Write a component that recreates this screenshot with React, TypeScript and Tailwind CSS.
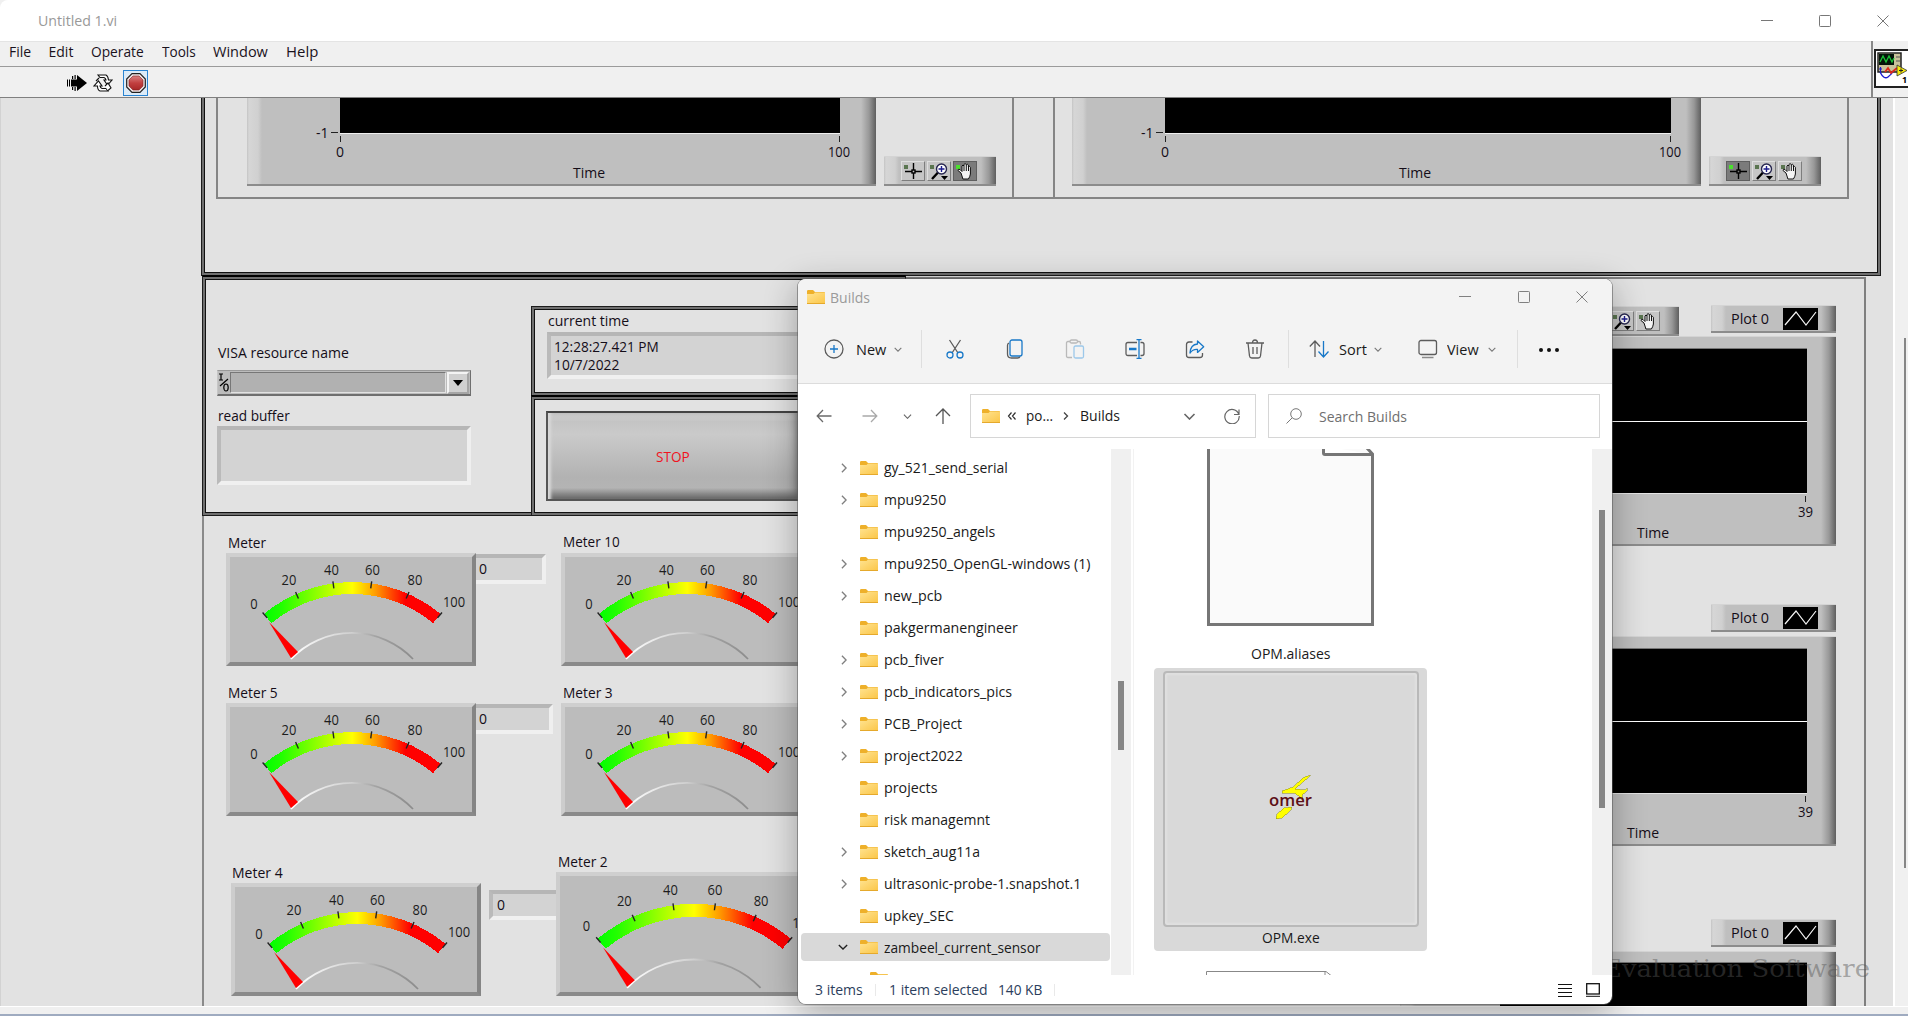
import React, { useLayoutEffect, useRef, useState } from "react";

/* Text squeezed or stretched horizontally to an exact advance width. */
function Fit({ w, className = "", children }: { w: number; className?: string; children: string }) {
  const ref = useRef<HTMLSpanElement>(null);
  const [k, setK] = useState(1);
  useLayoutEffect(() => {
    const n = ref.current?.offsetWidth ?? 0;
    if (n > 0) setK(w / n);
  }, [w, children]);
  return (
    <span className={`block h-5 shrink-0 whitespace-nowrap leading-5 ${className}`} style={{ width: w }}>
      <span ref={ref} className="inline-block origin-left" style={{ transform: `scaleX(${k})` }}>
        {children}
      </span>
    </span>
  );
}

/* ---------- LabVIEW front panel ---------- */

const Frame = ({ className }: { className: string }) => (
  <div className={`absolute border border-[#1c1c1c] shadow-[inset_0_0_0_2px_#6f6f6f,inset_0_0_0_3px_#101010] ${className}`} />
);

const Face = ({ className, children }: { className: string; children?: React.ReactNode }) => (
  <div
    className={`absolute flex border-b-2 border-t border-b-[#8c8c8c] border-t-[#d4d4d4] bg-[linear-gradient(90deg,#c4c4c4_0,#d6d6d6_2px,#d0d0d0_11px,#bfbfbf_15px,#bfbfbf_calc(100%-15px),#989898_calc(100%-7px),#5f5f5f_100%)] ${className}`}
  >
    {children}
  </div>
);

const Sunken = ({ className, children }: { className: string; children?: React.ReactNode }) => (
  <div className={`absolute border-4 border-b-[#f0f0f0] border-l-[#bababa] border-r-[#efefef] border-t-[#b6b6b6] bg-[#d3d3d3] ${className}`}>
    {children}
  </div>
);

function PaletteButton({ kind, on }: { kind: "cross" | "zoom" | "hand"; on?: boolean }) {
  return (
    <div
      className={`h-5 w-6 border ${on ? "border-[#5f5f5f] bg-[#7b7b7b]" : "border-b-[#7d7d7d] border-l-[#dedede] border-r-[#7d7d7d] border-t-[#dedede] bg-[#c6c6c6]"}`}
    >
      <svg viewBox="0 0 24 20" className="-ml-px -mt-px h-5 w-6">
        <rect x="3" y="4" width="4" height="4" fill={on ? "#4be02e" : "#5a7550"} />
        {kind === "cross" && (
          <g stroke="#000" strokeWidth="1.4" fill="none">
            <path d="M12.500 2v7M12.500 12v6M4 10.500h7M14 10.500h7" />
            <rect x="11" y="9" width="3" height="3" />
          </g>
        )}
        {kind === "zoom" && (
          <g>
            <path d="M11 11.5L5 18" stroke="#000" strokeWidth="2.4" />
            <circle cx="14.5" cy="8" r="5" fill="#fff" stroke="#26264f" strokeWidth="1.4" />
            <path d="M14.5 5v6M11.5 8h6" stroke="#1c1c8c" strokeWidth="1.4" />
            <path d="M14 15h7l-3.5 4z" />
          </g>
        )}
        {kind === "hand" && (
          <path
            d="M8 12L5 9.500q0-2 2-1l2 2V5q1-2 2 0V3.500q1-2 2.200 0V4q1-1.600 2.200 0v2q1.300-1.400 2 .300V13q-.5 3-2 5h-5.500Q9 15 8 12zM11 5v5M13.300 4v6M15.500 5v5"
            fill="#f4f4f4"
            stroke="#111"
            strokeWidth="1"
          />
        )}
      </svg>
    </div>
  );
}

function Palette({ className, active }: { className: string; active?: number }) {
  return (
    <Face className={`h-[30px] w-[112px] gap-[2px] pl-[17px] pt-1 ${className}`}>
      <PaletteButton kind="cross" on={active === 0} />
      <PaletteButton kind="zoom" on={active === 1} />
      <PaletteButton kind="hand" on={active === 2} />
    </Face>
  );
}

function Legend({ className }: { className: string }) {
  return (
    <Face className={`h-[28px] w-[125px] pl-5 pt-[2px] ${className}`}>
      <Fit w={38} className="mr-[14px] mt-px">Plot 0</Fit>
      <svg viewBox="0 0 35 22" className="h-[22px] w-[35px] bg-black">
        <path d="M2 17L13 4l10 13L33 4" fill="none" stroke="#f4f4f4" strokeWidth="1.2" />
      </svg>
    </Face>
  );
}

const polar = (cx: number, cy: number, r: number, deg: number) => {
  const a = (deg * Math.PI) / 180;
  return [cx + r * Math.sin(a), cy - r * Math.cos(a)];
};

const METER_LABELS: [string, number, number][] = [
  ["0", 28, 50.5], ["20", 63, 27], ["40", 105.5, 17], ["60", 146.5, 17], ["80", 189, 27], ["100", 228, 48.5],
];

function Meter({ className, s = 1 }: { className: string; s?: number }) {
  const cx = 126.3 * s, cy = 167.5 * s, R = 138.4 * s, r = 126.5 * s, A = 39.7;
  const p = [polar(cx, cy, R, -A), polar(cx, cy, R, A), polar(cx, cy, r, A), polar(cx, cy, r, -A)];
  const q = (x: number, y: number) => `${x * s} ${y * s}`;
  return (
    <div className={`absolute border-4 border-b-[#8a8a8a] border-l-[#cdcdcd] border-r-[#858585] border-t-[#cfcfcf] bg-[#bcbcbc] ${className}`}>
      <svg className="-ml-1 -mt-1 block overflow-visible" width={246 * s} height={109 * s}>
        <defs>
          <linearGradient id="dial" x1="0" x2="1">
            <stop offset="0" stopColor="#00ff00" />
            <stop offset=".1" stopColor="#22ff00" />
            <stop offset=".5" stopColor="#ffff00" />
            <stop offset=".63" stopColor="#ff9c00" />
            <stop offset=".8" stopColor="#ff0000" />
          </linearGradient>
          <linearGradient id="hub" x1="0" x2="1">
            <stop offset="0" stopColor="#fff" />
            <stop offset=".5" stopColor="#cfcfcf" />
            <stop offset=".7" stopColor="#a2a2a2" />
            <stop offset="1" stopColor="#8c8c8c" />
          </linearGradient>
        </defs>
        <path
          d={`M${p[0]}A${R} ${R} 0 0 1 ${p[1]}L${p[2]}A${r} ${r} 0 0 0 ${p[3]}Z`}
          fill="url(#dial)"
          shapeRendering="crispEdges"
        />
        {[0, 20, 40, 60, 80, 100].map((v) => {
          const a = -A + (v / 100) * 2 * A;
          const [x1, y1] = polar(cx, cy, R + 2, a);
          const [x2, y2] = polar(cx, cy, R - 5, a);
          return <line key={v} x1={x1} y1={y1} x2={x2} y2={y2} stroke="#222" strokeWidth="1.4" />;
        })}
        <path d={`M${q(65, 106)}A${84.5 * s} ${84.5 * s} 0 0 1 ${q(187, 106)}`} fill="none" stroke="url(#hub)" strokeWidth="1.8" />
        <path d={`M${q(43, 69)}L${q(72, 99)}L${q(65, 105)}Z`} fill="#ff0000" />
        {METER_LABELS.map(([t, x, y]) => (
          <text key={t} x={x * (s > 1 ? 1.085 : 1)} y={y * (s > 1 ? 1.06 : 1) + 5} textAnchor="middle" fontSize="14" textLength={t.length * 7.4} lengthAdjust="spacingAndGlyphs" fill="#1c1c1c">
            {t}
          </text>
        ))}
      </svg>
    </div>
  );
}

function FrontPanel() {
  return (
    <div className="absolute -left-px -top-[98px] h-[1016px] w-[1893px] text-[14px] text-[#140d18]">
      <div className="absolute left-[202px] top-[277px] h-[760px] w-[1664px] border-2 border-[#7f7f7f] border-l-[#8a8a8a]" />
      <Frame className="left-[201px] top-0 h-[276px] w-[1680px]" />
      <Frame className="left-[202px] top-[275px] h-[241px] w-[704px] border-t-2 border-t-black" />
      <Frame className="left-[531px] top-[306px] h-[90px] w-[375px]" />
      <Frame className="left-[531px] top-[395px] h-[121px] w-[375px] border-t-2 border-t-black" />

      <div className="absolute left-[216px] top-0 h-[199px] w-[798px] border-2 border-[#858585]" />
      <div className="absolute left-[1012px] top-0 h-[199px] w-[43px] border-2 border-[#858585]" />
      <div className="absolute left-[1053px] top-0 h-[199px] w-[796px] border-2 border-[#858585]" />

      <Face className="left-[247px] top-0 h-[186px] w-[629px]" />
      <div className="absolute left-[340px] top-0 h-[134px] w-[500px] border-b border-[#f0f0f0] bg-black" />
      <Fit w={13} className="absolute left-[316px] top-[123px]">-1</Fit>
      <div className="absolute left-[331px] top-[132px] h-px w-[7px] bg-[#222]" />
      <div className="absolute left-[340px] top-[136px] h-[6px] w-px bg-[#222]" />
      <div className="absolute left-[839px] top-[136px] h-[6px] w-px bg-[#222]" />
      <Fit w={8} className="absolute left-[336px] top-[142px]">0</Fit>
      <Fit w={22} className="absolute left-[828px] top-[142px]">100</Fit>
      <Fit w={32} className="absolute left-[573px] top-[163px]">Time</Fit>
      <Palette className="left-[884px] top-[156px]" active={2} />

      <Face className="left-[1072px] top-0 h-[186px] w-[629px]" />
      <div className="absolute left-[1165px] top-0 h-[134px] w-[506px] border-b border-[#f0f0f0] bg-black" />
      <Fit w={13} className="absolute left-[1141px] top-[123px]">-1</Fit>
      <div className="absolute left-[1156px] top-[132px] h-px w-[7px] bg-[#222]" />
      <div className="absolute left-[1165px] top-[136px] h-[6px] w-px bg-[#222]" />
      <div className="absolute left-[1670px] top-[136px] h-[6px] w-px bg-[#222]" />
      <Fit w={8} className="absolute left-[1161px] top-[142px]">0</Fit>
      <Fit w={22} className="absolute left-[1659px] top-[142px]">100</Fit>
      <Fit w={32} className="absolute left-[1399px] top-[163px]">Time</Fit>
      <Palette className="left-[1709px] top-[156px]" active={0} />

      <Fit w={131} className="absolute left-[218px] top-[343px]">VISA resource name</Fit>
      <div className="absolute left-[217px] top-[370px] flex h-[26px] w-[254px] items-center border border-b-2 border-b-[#6f6f6f] border-l-[#c6c6c6] border-r-[#6f6f6f] border-t-[#9a9a9a] bg-[#bcbcbc]">
        <svg viewBox="0 0 12 22" className="h-[22px] w-[12px] fill-none stroke-black" strokeWidth="1.2">
          <path d="M1 2h4M3 2v6M1 8h4M2 14l8-7" />
          <ellipse cx="8" cy="15.500" rx="2.200" ry="3.500" />
        </svg>
        <div className="h-[21px] w-[216px] border border-b-[#e2e2e2] border-l-[#777] border-r-[#e2e2e2] border-t-[#777] bg-[#b1b1b1]" />
        <div className="ml-px flex h-[22px] w-[22px] items-center justify-center border-2 border-b-[#a5a5a5] border-l-[#f4f4f4] border-r-[#a5a5a5] border-t-[#f4f4f4] bg-[#d0d0d0]">
          <svg viewBox="0 0 10 6" className="h-[6px] w-[10px]"><path d="M0 0h10L5 6z" /></svg>
        </div>
      </div>
      <Fit w={72} className="absolute left-[218px] top-[406px]">read buffer</Fit>
      <Sunken className="left-[217px] top-[426px] h-[59px] w-[254px]" />

      <Fit w={81} className="absolute left-[548px] top-[311px]">current time</Fit>
      <Sunken className="left-[547px] top-[332px] h-[47px] w-[300px]">
        <Fit w={105} className="ml-[3px] mt-px">12:28:27.421 PM</Fit>
        <Fit w={65} className="-mt-[2px] ml-[3px]">10/7/2022</Fit>
      </Sunken>
      <div className="absolute left-[546px] top-[411px] flex h-[90px] w-[256px] items-center border-2 border-[#555] border-t-[#444] bg-[linear-gradient(180deg,#d8d8d8_0,#c4c4c4_10%,#cacaca_25%,#b2b2b2_75%,#b4b4b4_87%,#686868_100%)] pl-[108px] pt-[2px] shadow-[inset_5px_0_3px_-2px_#d8d8d8,inset_-6px_0_8px_-3px_#666]">
        <Fit w={34} className="text-[#f0141e]">STOP</Fit>
      </div>

      <Fit w={38} className="absolute left-[228px] top-[533px]">Meter</Fit>
      <Sunken className="left-[472px] top-[554px] h-[30px] w-[74px]">
        <Fit w={8} className="ml-[3px] mt-px">0</Fit>
      </Sunken>
      <Meter className="left-[226px] top-[553px] h-[113px] w-[250px]" />
      <Fit w={57} className="absolute left-[563px] top-[532px]">Meter 10</Fit>
      <Meter className="left-[561px] top-[553px] h-[113px] w-[250px]" />

      <Fit w={50} className="absolute left-[228px] top-[683px]">Meter 5</Fit>
      <Sunken className="left-[472px] top-[704px] h-[30px] w-[81px]">
        <Fit w={8} className="ml-[3px] mt-px">0</Fit>
      </Sunken>
      <Meter className="left-[226px] top-[703px] h-[113px] w-[250px]" />
      <Fit w={50} className="absolute left-[563px] top-[683px]">Meter 3</Fit>
      <Meter className="left-[561px] top-[703px] h-[113px] w-[250px]" />

      <Fit w={51} className="absolute left-[232px] top-[863px]">Meter 4</Fit>
      <Meter className="left-[231px] top-[883px] h-[113px] w-[250px]" />
      <Sunken className="left-[489px] top-[890px] h-[30px] w-[76px]">
        <Fit w={8} className="ml-1 mt-px">0</Fit>
      </Sunken>
      <Fit w={50} className="absolute left-[558px] top-[852px]">Meter 2</Fit>
      <Meter className="left-[556px] top-[872px] h-[124px] w-[274px]" s={1.094} />

      <Palette className="left-[1567px] top-[306px]" />
      <Legend className="left-[1711px] top-[305px]" />
      <Face className="left-[1400px] top-[336px] h-[210px] w-[436px]" />
      <div className="absolute left-[1500px] top-[348px] h-[146px] w-[307px] border-b border-t border-b-[#e6e6e6] border-t-[#777] bg-black pt-[72px]">
        <div className="h-px bg-white" />
      </div>
      <div className="absolute left-[1805px] top-[496px] h-[6px] w-px bg-[#222]" />
      <Fit w={15} className="absolute left-[1798px] top-[502px]">39</Fit>
      <Fit w={32} className="absolute left-[1637px] top-[523px]">Time</Fit>

      <Legend className="left-[1711px] top-[604px]" />
      <Face className="left-[1400px] top-[636px] h-[210px] w-[436px]" />
      <div className="absolute left-[1500px] top-[648px] h-[146px] w-[307px] border-b border-t border-b-[#e6e6e6] border-t-[#777] bg-black pt-[72px]">
        <div className="h-px bg-white" />
      </div>
      <div className="absolute left-[1805px] top-[796px] h-[6px] w-px bg-[#222]" />
      <Fit w={15} className="absolute left-[1798px] top-[802px]">39</Fit>
      <Fit w={32} className="absolute left-[1627px] top-[823px]">Time</Fit>

      <Legend className="left-[1711px] top-[919px]" />
      <Face className="left-[1400px] top-[951px] h-[100px] w-[436px]" />
      <div className="absolute left-[1500px] top-[962px] h-[90px] w-[307px] border-t border-[#777] bg-black" />
      <Fit w={267} className="absolute left-[1603px] top-[959px] font-['DejaVu_Serif'] text-[25px] text-[#555]/45">
        Evaluation Software
      </Fit>
    </div>
  );
}

/* ---------- Icons ---------- */

const Folder = ({ className = "" }: { className?: string }) => (
  <svg viewBox="0 0 18 14" className={`h-[14px] w-[18px] shrink-0 ${className}`}>
    <defs>
      <linearGradient id="fold" x1="0" y1="0" x2="1" y2="1">
        <stop offset="0" stopColor="#ffe391" />
        <stop offset="1" stopColor="#fbc648" />
      </linearGradient>
    </defs>
    <path d="M0 1.200Q0 0 1.200 0H6l2 2h9q1 0 1 1v4H0z" fill="#eeb02a" />
    <path d="M0 4h6.500L8 2.600h10V13.500H0z" fill="url(#fold)" />
    <path d="M0 13h18v1H0z" fill="#e5a92c" />
  </svg>
);

const Chevron = ({ className }: { className: string }) => (
  <svg viewBox="0 0 12 7" fill="none" strokeWidth="1.6" className={`shrink-0 ${className}`}>
    <path d="M1 1l5 5 5-5" stroke="currentColor" />
  </svg>
);

const G = "#5c5c5c";
const B = "#1878c8";
const Icon = ({ className = "", children }: { className?: string; children: React.ReactNode }) => (
  <svg viewBox="0 0 20 20" fill="none" stroke={G} strokeWidth="1.3" className={`h-5 w-5 shrink-0 ${className}`}>
    {children}
  </svg>
);

function Caption({ className, size }: { className: string; size: string }) {
  return (
    <div className={`flex items-center ${className}`}>
      <svg viewBox="0 0 12 12" className={size}><path d="M0 5.500h12" stroke="currentColor" /></svg>
      <svg viewBox="0 0 12 12" className={size}><rect x=".5" y=".5" width="11" height="11" rx=".8" fill="none" stroke="currentColor" /></svg>
      <svg viewBox="0 0 12 12" className={size}><path d="M.5.5l11 11M11.500.5l-11 11" stroke="currentColor" /></svg>
    </div>
  );
}

/* ---------- File explorer ---------- */

const TREE: [string, number, boolean][] = [
  ["gy_521_send_serial", 124, true],
  ["mpu9250", 62, true],
  ["mpu9250_angels", 111, false],
  ["mpu9250_OpenGL-windows (1)", 207, true],
  ["new_pcb", 58, true],
  ["pakgermanengineer", 134, false],
  ["pcb_fiver", 60, true],
  ["pcb_indicators_pics", 128, true],
  ["PCB_Project", 78, true],
  ["project2022", 79, true],
  ["projects", 53, false],
  ["risk managemnt", 106, false],
  ["sketch_aug11a", 96, true],
  ["ultrasonic-probe-1.snapshot.1", 197, true],
  ["upkey_SEC", 70, false],
];

function Explorer() {
  return (
    <div className="absolute left-[798px] top-[279px] flex h-[725px] w-[814px] flex-col overflow-hidden rounded-lg bg-white text-[14px] text-[#1a1a1a]">
      <div className="h-[105px] shrink-0 border-b border-[#dcdcdc] bg-[#f3f3f3]">
        <div className="flex h-9 items-center pl-[9px] text-[#9a9a9a]">
          <Folder />
          <Fit w={40} className="ml-[5px] mt-px">Builds</Fit>
          <Caption className="ml-[589px] gap-[46.5px] text-[#808080]" size="h-3 w-3" />
        </div>
        <div className="flex h-[67px] items-center pl-[26px]">
          <Icon className="mt-px">
            <circle cx="10" cy="10" r="9" />
            <path d="M10 6v8M6 10h8" stroke={B} />
          </Icon>
          <Fit w={30} className="ml-3 mt-[3px]">New</Fit>
          <Chevron className="ml-2 mt-px h-[5px] w-2 text-[#777]" />
          <div className="ml-[19px] mt-px h-[38px] w-px bg-[#dedede]" />
          <Icon className="ml-[23px] mt-px">
            <path d="M4.500 1l8.500 13M15.500 1L7 14" />
            <circle cx="5" cy="16" r="3" stroke={B} />
            <circle cx="15" cy="16" r="3" stroke={B} />
          </Icon>
          <Icon className="ml-[40px] mt-px">
            <path d="M4 4Q2.500 4.500 2.500 6.500V15q0 4 4 4h6q2 0 2.500-1.500" />
            <rect x="5" y="1" width="12" height="16" rx="2" stroke={B} />
          </Icon>
          <Icon className="ml-[40px] mt-px">
            <path d="M7 18.500H3q-1.500 0-1.500-1.500V4q0-1.500 1.500-1.500h2M12.500 2.500H14q1.500 0 1.500 1.500v1.500" stroke="#b9b9b9" />
            <rect x="5" y="1" width="7.500" height="3" rx="1.500" stroke="#b9b9b9" />
            <rect x="9" y="7" width="9.500" height="12" rx="1.500" stroke="#9cc8ea" />
          </Icon>
          <Icon className="ml-[40px] mt-px">
            <path d="M12 16.500H3q-2 0-2-2v-9q0-2 2-2h9M15.500 3.500h1.500q2 0 2 2v9q0 2-2 2h-1.500" />
            <path d="M11.500.7h5M11.500 19.300h5M14 .7v18.600" stroke={B} />
            <path d="M4 10h7.500" stroke={B} strokeWidth="2.600" />
          </Icon>
          <Icon className="ml-[40px] mt-px">
            <path d="M7.500 3H4Q1.500 3 1.500 5.500V16q0 2.500 2.500 2.500h11q2.500 0 2.500-2.500v-2" />
            <path d="M12.500 2l6.200 5.800-6.200 5.600V10.500Q8 10 5 14q.5-8.500 7.500-9z" stroke={B} strokeLinejoin="round" />
          </Icon>
          <Icon className="ml-[40px] mt-px">
            <path d="M1 4h18M7.500 4q0-3 2.500-3t2.500 3M3 4l1.500 13q.3 2 2.300 2h6.400q2 0 2.300-2L17 4M8 8v7M12 8v7" />
          </Icon>
          <div className="ml-[23px] mt-px h-[38px] w-px bg-[#dedede]" />
          <Icon className="ml-[20px] mt-px">
            <path d="M6 18V2M.8 7.500L6 2l5 5.500" />
            <path d="M14.500 2v16M9.500 12.500l5 5.500 5-5.500" stroke={B} />
          </Icon>
          <Fit w={28} className="ml-[10px] mt-[3px]">Sort</Fit>
          <Chevron className="ml-[7px] mt-px h-[5px] w-2 text-[#777]" />
          <Icon className="ml-[36px] mt-px">
            <rect x="1" y="1.500" width="17.500" height="14" rx="2" />
            <path d="M4 18.500h11.500" stroke="#8a8a8a" />
          </Icon>
          <Fit w={32} className="ml-[9px] mt-[3px]">View</Fit>
          <Chevron className="ml-[9px] mt-px h-[5px] w-2 text-[#777]" />
          <div className="ml-[21px] mt-px h-[38px] w-px bg-[#dedede]" />
          <div className="ml-[21px] mt-[3px] flex gap-1">
            <i className="h-1 w-1 rounded-full bg-[#111]" />
            <i className="h-1 w-1 rounded-full bg-[#111]" />
            <i className="h-1 w-1 rounded-full bg-[#111]" />
          </div>
        </div>
      </div>

      <div className="flex h-[65px] shrink-0 items-center pb-px pl-[18px]">
        <svg viewBox="0 0 16 16" fill="none" stroke="#6a6a6a" strokeWidth="1.3" className="h-4 w-4"><path d="M15.500 8H1.500M7 2L1.200 8 7 14" /></svg>
        <svg viewBox="0 0 16 16" fill="none" stroke="#a9a9a9" strokeWidth="1.3" className="ml-[30px] h-4 w-4"><path d="M.5 8h14M9 2l5.800 6L9 14" /></svg>
        <Chevron className="ml-[25px] h-[5px] w-[9px] text-[#666]" />
        <svg viewBox="0 0 16 16" fill="none" stroke="#555" strokeWidth="1.3" className="ml-[23px] h-4 w-4"><path d="M8 16V1M1 8l7-7 7 7" /></svg>
        <div className="ml-[19px] flex h-[44px] w-[286px] items-center border border-[#d6d6d6] pl-[11px]">
          <Folder />
          <svg viewBox="0 0 10 8" fill="none" stroke="#333" strokeWidth="1.200" className="ml-[7px] h-2 w-[10px]"><path d="M4.500.5L1.500 4l3 3.500M8.500.5L5.500 4l3 3.500" /></svg>
          <Fit w={27} className="ml-[9px]">po...</Fit>
          <svg viewBox="0 0 6 8" fill="none" stroke="#444" className="ml-[10px] h-2 w-[6px]"><path d="M1 .5L4.500 4 1 7.500" strokeWidth="1.300" /></svg>
          <Fit w={40} className="ml-[11px]">Builds</Fit>
          <Chevron className="ml-[63px] h-[7px] w-[13px] text-[#666]" />
          <svg viewBox="0 0 16 16" fill="none" stroke="#666" strokeWidth="1.200" className="ml-[28px] h-4 w-4">
            <path d="M14.800 6.200A7.200 7.200 0 1 0 15.200 8M15 1.500v5h-5" />
          </svg>
        </div>
        <div className="ml-3 flex h-[44px] w-[332px] items-center border border-[#d6d6d6] pl-[17px] text-[#6f6f6f]">
          <svg viewBox="0 0 16 16" fill="none" stroke="#777" className="h-4 w-4"><circle cx="10" cy="6" r="5.300" /><path d="M6.200 9.800L.5 15.500" /></svg>
          <Fit w={88} className="ml-[17px] mt-px">Search Builds</Fit>
        </div>
      </div>

      <div className="flex h-[526px] shrink-0">
        <div className="h-full w-[313px] overflow-hidden pl-[3px] pt-[3px]">
          {TREE.map(([name, w, open]) => (
            <div key={name} className="flex h-8 items-center pl-[39px]">
              <span className="w-5">
                {open && <Chevron className="-ml-px h-[6px] w-[10px] -rotate-90 text-[#808080]" />}
              </span>
              <Folder />
              <Fit w={w} className="ml-[6px]">{name}</Fit>
            </div>
          ))}
          <div className="mt-px flex h-7 w-[309px] items-center rounded-sm bg-[#d9d9d9] pl-[37px]">
            <Chevron className="mr-3 h-[6px] w-[10px] text-[#222]" />
            <Folder />
            <Fit w={157} className="ml-[6px] mt-px">zambeel_current_sensor</Fit>
          </div>
          <Folder className="ml-[69px] mt-[11px]" />
        </div>
        <div className="flex w-5 flex-col items-center bg-[#f0f0f0] pt-[232px]">
          <div className="h-[69px] w-[6px] bg-[#868686]" />
        </div>
        <div className="ml-[2px] w-px bg-[#f2f2f2]" />
        <div className="flex w-[458px] flex-col overflow-hidden pl-[20px]">
          <div className="flex w-[273px] flex-col items-center">
            <svg viewBox="0 0 167 177" className="h-[177px] w-[167px]" fill="#fafafa" stroke="#767676">
              <path d="M1.500-3V175.500H165.500V5L159-2" strokeWidth="3" />
              <path d="M116.500-3V4q0 1.500 1.500 1.500h48" fill="#fff" strokeWidth="3" />
            </svg>
            <Fit w={79} className="mt-[18px]">OPM.aliases</Fit>
          </div>
          <div className="mt-1 flex h-[283px] w-[273px] flex-col items-center rounded-sm bg-[#d9d9d9] pt-[3px]">
            <div className="flex h-[256px] w-[256px] items-center justify-center rounded border-2 border-[#b9b9b9] shadow-[inset_0_0_2px_2px_#e0e0e0]">
              <svg viewBox="0 0 44 46" className="-mt-1 h-[46px] w-[44px] overflow-visible">
                <path
                  d="M41 1l-7 3-10 9-11 4v2h12l5 3 2 3h2l-1-4 5-4v-3l-2 2-10-1 8-7 7-6zM15 34l8-1-1 3-9 8-6 1 1-5z"
                  fill="#ffff00"
                  stroke="#8b8b20"
                  strokeWidth=".5"
                  shapeRendering="crispEdges"
                />
                <text x="0" y="32" fontSize="17" fontWeight="600" textLength="43" lengthAdjust="spacingAndGlyphs" fill="#5c0f16">omer</text>
              </svg>
            </div>
            <Fit w={58} className="mt-px">OPM.exe</Fit>
          </div>
          <svg viewBox="0 0 130 4" className="ml-[52px] mt-5 h-1 w-[130px]" fill="none" stroke="#888"><path d="M.5 4V.5H120l5 4M119 .5V4" /></svg>
        </div>
        <div className="flex w-5 flex-col items-center bg-[#f0f0f0] pt-[61px]">
          <div className="h-[298px] w-[6px] bg-[#868686]" />
        </div>
      </div>

      <div className="flex h-[29px] items-center pl-[17px] text-[#2c3e5c]">
        <Fit w={48}>3 items</Fit>
        <div className="ml-3 h-3 w-px bg-[#e9e9e9]" />
        <Fit w={99} className="ml-[13px]">1 item selected</Fit>
        <Fit w={44} className="ml-[10px]">140 KB</Fit>
        <div className="ml-3 h-3 w-px bg-[#e9e9e9]" />
        <svg viewBox="0 0 14 14" stroke="#111" className="ml-[503px] h-[14px] w-[14px]"><path d="M0 1.500h14M0 5.500h14M0 9.500h14M0 13.500h14" /></svg>
        <svg viewBox="0 0 14 14" stroke="#111" fill="none" className="ml-[14px] h-[14px] w-[14px]"><rect x=".7" y=".7" width="12.600" height="10.300" strokeWidth="1.300" /><path d="M0 13.300h14" /></svg>
      </div>
    </div>
  );
}

export default function App() {
  return (
    <div className="relative flex h-[1016px] w-[1908px] flex-col overflow-hidden bg-[#f0f0f0] font-['Open_Sans','Noto_Sans',sans-serif] text-[14px] text-[#1a121c]">
      <header className="flex h-[41px] shrink-0 items-center rounded-tl-lg bg-white pl-[38px] text-[#999]">
        <Fit w={79}>Untitled 1.vi</Fit>
        <Caption className="ml-[1644px] gap-[46px] text-[#777]" size="h-3 w-3" />
      </header>
      <div className="flex h-[57px] shrink-0 border-b border-[#808080]">
        <div className="flex w-[1873px] flex-col border-r-2 border-[#888]">
          <nav className="flex h-[26px] items-center gap-[17.5px] border-b border-t border-b-[#9b9b9b] border-t-[#e4e4e4] pb-1 pl-[9px]">
            <Fit w={22}>File</Fit>
            <Fit w={25}>Edit</Fit>
            <Fit w={53}>Operate</Fit>
            <Fit w={34}>Tools</Fit>
            <Fit w={55}>Window</Fit>
            <Fit w={32}>Help</Fit>
          </nav>
          <div className="flex flex-1 items-center pl-[67px] pt-px">
            <svg viewBox="0 0 20 18" className="h-[18px] w-5">
              <path d="M4 5.500h6V1l10 8-10 8v-4.500H4zM2 5.500h1v7H2zM0 5.500h1v7H0zM5 2h1.200v3H5zM7.500 1h1.200v4H7.500zM5 13h1.200v3H5zM7.500 13h1.200v4H7.500z" />
            </svg>
            <svg viewBox="0 0 20 18" className="ml-[6px] h-[18px] w-5" fill="#fff" stroke="#111" strokeWidth="1.1">
              <path d="M5 1h8q2 1 2.500 5H19l-4.500 5-3.500-5h2q-.5-2-2-2.500H7z" />
              <path d="M15 17H7q-2.500-1-2.500-5H1l4.500-5L9 12H7q.5 2 2 2.500h4z" />
              <path d="M12 12l3-3 3 5-3 2.500M6 4l-3 3" />
            </svg>
            <div className="ml-[10px] flex h-[26px] w-[25px] items-center justify-center border border-[#2a84d2] bg-[#dcebf8]">
              <svg viewBox="0 0 20 20" className="h-5 w-5">
                <defs>
                  <linearGradient id="stop" x1="0" y1="0" x2="0" y2="1">
                    <stop offset="0" stopColor="#d98080" />
                    <stop offset=".5" stopColor="#c24040" />
                    <stop offset="1" stopColor="#a82828" />
                  </linearGradient>
                </defs>
                <path d="M6 .7h8L19.300 6v8L14 19.300H6L.7 14V6z" fill="#f2e6e6" stroke="#222" strokeWidth="1.200" />
                <path d="M7 3h6l4 4v6l-4 4H7l-4-4V7z" fill="url(#stop)" stroke="#7c2020" strokeWidth=".6" />
              </svg>
            </div>
          </div>
        </div>
        <div className="ml-px mt-2 h-[39px] flex-1 border-2 border-r-0 border-[#222] bg-white pl-px pt-px">
          <svg viewBox="0 0 31 34" className="h-[34px] w-[31px]">
            <rect x="1" y="1" width="23" height="19" fill="#c9c29a" stroke="#222" strokeWidth="1.500" />
            <rect x="2" y="2" width="15" height="11" fill="#04140a" />
            <path d="M3 10l3-6 3 6 3-6 3 6 2-4" fill="none" stroke="#19c235" strokeWidth="1.300" />
            <path d="M20 4v2M20 8v2M22 4v2M22 8v2" stroke="#555" />
            <path d="M3 20q4 8 8 5t5-6" fill="none" stroke="#1c1cd0" strokeWidth="1.400" />
            <path d="M2 17h3M3.500 15v6" stroke="#1c1cd0" strokeWidth="1.200" />
            <path d="M8 20l3-4 3 5 6-5" fill="none" stroke="#e02a1a" strokeWidth="1.800" />
            <path d="M20 13l10 5.500-10 5.500z" fill="#f5e90c" stroke="#333" strokeWidth=".8" />
            <path d="M22 18.500h4M24 16.500v4" stroke="#222" />
            <text x="25" y="31" fontSize="9" fontWeight="700">1</text>
          </svg>
        </div>
      </div>
      <main className="flex h-[908px] shrink-0">
        <div className="relative w-[1893px] overflow-hidden border-l border-[#d2d2d2] bg-[#e2e2e2]">
          <FrontPanel />
        </div>
        <div className="flex flex-1 justify-end border-l-2 border-white pr-[2px] pt-[240px]">
          <div className="h-[530px] w-[2px] bg-[#868686]" />
        </div>
      </main>
      <footer className="flex flex-1 flex-col justify-end border-t border-white">
        <div className="h-[2px] bg-[#9fabc0]" />
      </footer>
      <div className="absolute left-[798px] top-[279px] h-[725px] w-[814px] rounded-lg shadow-[0_0_0_1px_rgba(90,90,90,0.55),0_8px_34px_rgba(0,0,0,0.32)]" />
      <Explorer />
    </div>
  );
}
